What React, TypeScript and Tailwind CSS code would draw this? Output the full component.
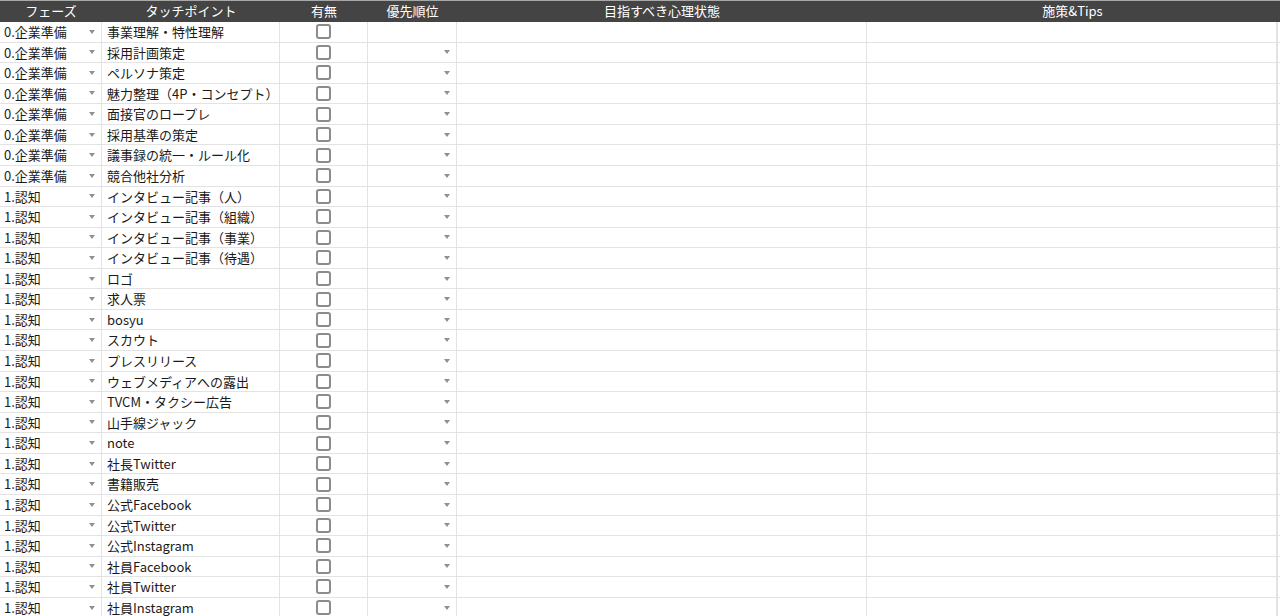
const rows: [string, string, boolean][] = [
  ['0.企業準備', '事業理解・特性理解', false],
  ['0.企業準備', '採用計画策定', true],
  ['0.企業準備', 'ペルソナ策定', true],
  ['0.企業準備', '魅力整理（4P・コンセプト）', true],
  ['0.企業準備', '面接官のロープレ', true],
  ['0.企業準備', '採用基準の策定', true],
  ['0.企業準備', '議事録の統一・ルール化', true],
  ['0.企業準備', '競合他社分析', true],
  ['1.認知', 'インタビュー記事（人）', true],
  ['1.認知', 'インタビュー記事（組織）', true],
  ['1.認知', 'インタビュー記事（事業）', true],
  ['1.認知', 'インタビュー記事（待遇）', true],
  ['1.認知', 'ロゴ', true],
  ['1.認知', '求人票', true],
  ['1.認知', 'bosyu', true],
  ['1.認知', 'スカウト', true],
  ['1.認知', 'プレスリリース', true],
  ['1.認知', 'ウェブメディアへの露出', true],
  ['1.認知', 'TVCM・タクシー広告', true],
  ['1.認知', '山手線ジャック', true],
  ['1.認知', 'note', true],
  ['1.認知', '社長Twitter', true],
  ['1.認知', '書籍販売', true],
  ['1.認知', '公式Facebook', true],
  ['1.認知', '公式Twitter', true],
  ['1.認知', '公式Instagram', true],
  ['1.認知', '社員Facebook', true],
  ['1.認知', '社員Twitter', true],
  ['1.認知', '社員Instagram', true],
];

const cols = 'grid grid-cols-[102px_178px_88px_89px_410px_411px]';

function Arrow() {
  return <span className="h-0 w-0 border-x-[3.5px] border-t-[4px] border-x-transparent border-t-[#909090]" />;
}

export default function App() {
  return (
    <div className="h-[616px] w-[1280px] overflow-hidden bg-white text-[13px] text-[#1a1a1a]" style={{ fontFamily: '"Noto Sans CJK JP", "Liberation Sans", sans-serif' }}>
      <div className={`${cols} h-[22px] border-t border-[#a8a8a8] bg-[#444] leading-[20px] text-white`}>
        {['フェーズ', 'タッチポイント', '有無', '優先順位', '目指すべき心理状態', '施策&Tips'].map((h) => (
          <div key={h} className="text-center">{h}</div>
        ))}
      </div>
      {rows.map(([phase, tp, hasArrow], i) => (
        <div key={i} className={`${cols} h-[20.57px] border-b border-[#e3e3e3] leading-[19.5px]`}>
          <div className="flex items-center justify-between border-r border-[#e3e3e3] pl-1 pr-[6px]">
            <span>{phase}</span>
            <Arrow />
          </div>
          <div className="border-r border-[#e3e3e3] pl-[5px] whitespace-nowrap">{tp}</div>
          <div className="flex items-center justify-center border-r border-[#e3e3e3]">
            <span className="h-[15px] w-[15px] rounded-[3px] border-2 border-[#8c8c8c]" />
          </div>
          <div className="flex items-center justify-end border-r border-[#e3e3e3] pr-[6px]">
            {hasArrow && <Arrow />}
          </div>
          <div className="border-r border-[#e3e3e3]" />
          <div className="border-r-2 border-[#e3e3e3]" />
        </div>
      ))}
    </div>
  );
}
